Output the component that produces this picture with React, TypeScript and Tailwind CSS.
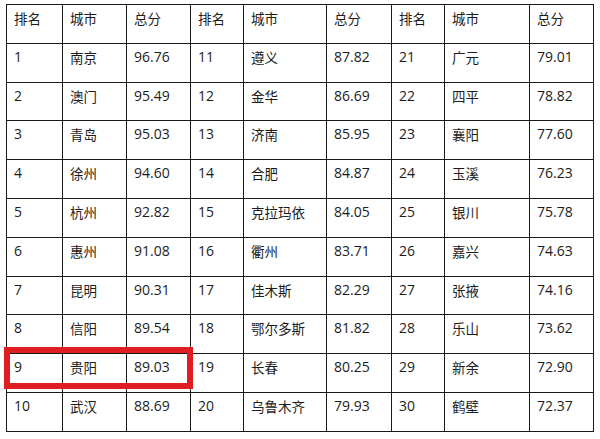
const rows: [string, string, string][] = [
  ["1", "南京", "96.76"],
  ["2", "澳门", "95.49"],
  ["3", "青岛", "95.03"],
  ["4", "徐州", "94.60"],
  ["5", "杭州", "92.82"],
  ["6", "惠州", "91.08"],
  ["7", "昆明", "90.31"],
  ["8", "信阳", "89.54"],
  ["9", "贵阳", "89.03"],
  ["10", "武汉", "88.69"],
  ["11", "遵义", "87.82"],
  ["12", "金华", "86.69"],
  ["13", "济南", "85.95"],
  ["14", "合肥", "84.87"],
  ["15", "克拉玛依", "84.05"],
  ["16", "衢州", "83.71"],
  ["17", "佳木斯", "82.29"],
  ["18", "鄂尔多斯", "81.82"],
  ["19", "长春", "80.25"],
  ["20", "乌鲁木齐", "79.93"],
  ["21", "广元", "79.01"],
  ["22", "四平", "78.82"],
  ["23", "襄阳", "77.60"],
  ["24", "玉溪", "76.23"],
  ["25", "银川", "75.78"],
  ["26", "嘉兴", "74.63"],
  ["27", "张掖", "74.16"],
  ["28", "乐山", "73.62"],
  ["29", "新余", "72.90"],
  ["30", "鹤壁", "72.37"],
];

const header = ["排名", "城市", "总分"];

function Cell({ children }: { children: string }) {
  const cjk = /[\u4e00-\u9fff]/.test(children);
  return (
    <div
      className={
        "border-r border-b border-[#1a1a1a] pl-[7px] pt-[3px] leading-[20px] whitespace-nowrap " +
        (cjk
          ? "font-['Noto_Sans_CJK_SC',sans-serif] text-[13.5px]"
          : "font-['Open_Sans',sans-serif] text-[14px]")
      }
    >
      {children}
    </div>
  );
}

export default function App() {
  const cells: string[] = [];
  for (let g = 0; g < 3; g++) cells.push(...header);
  for (let r = 0; r < 10; r++) {
    for (let g = 0; g < 3; g++) cells.push(...rows[g * 10 + r]);
  }

  return (
    <div lang="zh-CN" className="relative w-[600px] h-[439px] bg-white text-[#1c1c1c] overflow-hidden">
      <div className="ml-[6px] pt-[4px]">
        <div className="grid w-[588px] grid-cols-[56px_64px_64px_53px_83px_65px_53px_85px_64px] auto-rows-[38.8px] border-l border-t border-[#1a1a1a]">
          {cells.map((c, i) => (
            <Cell key={i}>{c}</Cell>
          ))}
        </div>
      </div>

      {/* red highlight around 贵阳 */}
      <div className="absolute left-[4px] top-[347px] w-[189px] h-[42px] border-[6px] border-[#e11d24]" />
    </div>
  );
}
